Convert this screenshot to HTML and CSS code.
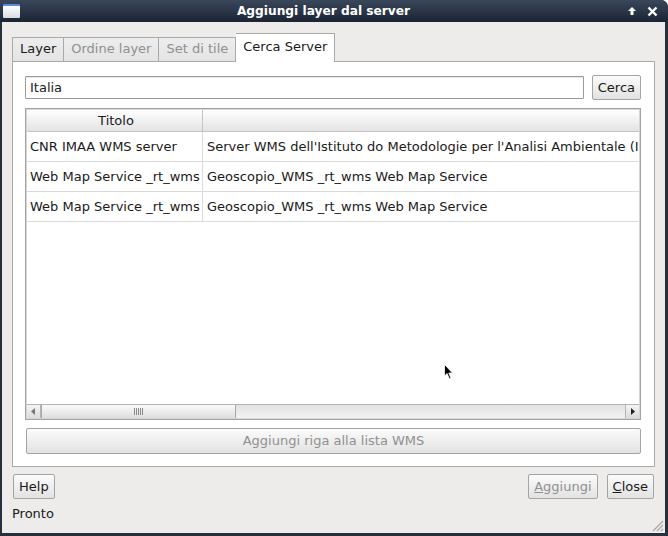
FILE: index.html
```html
<!DOCTYPE html>
<html>
<head>
<meta charset="utf-8">
<link rel="stylesheet" href="styles.css">
</head>
<body>
<div class="window">
  <div class="titlebar">
    <span class="winicon"></span>
    <span class="title">Aggiungi layer dal server</span>
    <span class="tbtns">
      <svg width="10" height="10" viewBox="0 0 10 10"><path d="M5 1 L9 5 L6.5 5 L6.5 9 L3.5 9 L3.5 5 L1 5 Z" fill="#fff"/></svg>
      <svg width="11" height="11" viewBox="0 0 11 11"><path d="M1.5 1.5 L9.5 9.5 M9.5 1.5 L1.5 9.5" stroke="#fff" stroke-width="2.4"/></svg>
    </span>
  </div>
  <div class="client">
    <div class="tabs">
      <div class="tab">Layer</div>
      <div class="tab dis">Ordine layer</div>
      <div class="tab dis">Set di tile</div>
      <div class="tab sel">Cerca Server</div>
    </div>
    <div class="pane">
      <div class="searchrow">
        <div class="input">Italia</div>
        <div class="btn">Cerca</div>
      </div>
      <div class="table">
        <div class="thead">
          <div class="c1 h">Titolo</div>
          <div class="c2 h"></div>
        </div>
        <div class="row"><div class="c1">CNR IMAA WMS server</div><div class="c2">Server WMS dell'Istituto do Metodologie per l'Analisi Ambientale (I</div></div>
        <div class="row"><div class="c1">Web Map Service _rt_wms</div><div class="c2">Geoscopio_WMS _rt_wms Web Map Service</div></div>
        <div class="row"><div class="c1">Web Map Service _rt_wms</div><div class="c2">Geoscopio_WMS _rt_wms Web Map Service</div></div>
        <div class="tbody-fill"></div>
        <div class="hscroll">
          <div class="arrow"><svg width="5" height="7" viewBox="0 0 5 7"><path d="M4 0 L0 3.5 L4 7 Z" fill="#777"/></svg></div>
          <div class="thumb"><span class="grip"></span></div>
          <div class="track"></div>
          <div class="arrow r"><svg width="5" height="7" viewBox="0 0 5 7"><path d="M1 0 L5 3.5 L1 7 Z" fill="#222"/></svg></div>
        </div>
      </div>
      <div class="btn wide dis">Aggiungi riga alla lista WMS</div>
    </div>
    <div class="bottomrow">
      <div class="btn">Help</div>
      <div class="spacer"></div>
      <div class="btn dis"><u>A</u>ggiungi</div>
      <div class="btn"><u>C</u>lose</div>
    </div>
    <div class="status">Pronto</div>
    <svg class="sizegrip" width="14" height="14" viewBox="0 0 14 14">
      <path d="M13 3 L3 13 M13 7 L7 13 M13 11 L11 13" stroke="#a8a8a8" stroke-width="1.2"/>
    </svg>
  </div>
  <svg class="cursor" width="12" height="18" viewBox="0 0 12 18">
    <path d="M0.5 0.5 L0.5 12 L3 9.5 L5.5 15 L7 14.3 L4.8 9 L8.5 9 Z" fill="#000" stroke="#fff" stroke-width="0.8"/>
  </svg>
</div>
</body>
</html>
```
FILE: styles.css
```css
* { box-sizing: border-box; }
html, body { margin: 0; padding: 0; }
body {
  width: 668px; height: 536px; overflow: hidden;
  font-family: "DejaVu Sans", sans-serif; font-size: 13px; color: #1a1a1a;
  background: #ffffff;
}
.window {
  position: relative;
  width: 668px; height: 536px;
  background: #27303d;
  border-top-right-radius: 7px;
  display: flex; flex-direction: column;
}
.titlebar {
  height: 22px; flex: none;
  display: flex; align-items: center;
  background: linear-gradient(#3a475a, #1b2434);
  border-top-right-radius: 7px;
  position: relative;
}
.winicon {
  margin-left: 3px; width: 17px; height: 14px;
  background: linear-gradient(#ffffff, #d8dbe0);
  border-top: 2px solid #5c8ad6;
  border-radius: 1px;
}
.title {
  flex: 1; text-align: center;
  color: #fff; font-weight: bold; font-size: 12.2px;
  padding-left: 0;
}
.tbtns { display: flex; align-items: center; gap: 10px; margin-right: 10px; }
.client {
  flex: 1; position: relative;
  background: #edecea;
  margin: 0 3px 3px 2px;
  padding: 11px 10px 0 10px;
  display: flex; flex-direction: column;
}
.tabs { display: flex; align-items: flex-end; height: 28px; position: relative; z-index: 1; }
.tab {
  height: 24px; padding: 0 7px; line-height: 21px;
  border: 1px solid #a9a9a9; border-bottom: none; border-left: none;
  background: linear-gradient(#ededed, #e4e4e4);
  color: #1a1a1a;
}
.tab:first-child { border-left: 1px solid #a9a9a9; }
.tab.dis { color: #8f8f8f; }
.tab.sel {
  background: #fff; line-height: 25px;
  padding: 0 7px; margin-bottom: -1px; height: 29px;
}
.pane {
  height: 406px; flex: none;
  background: #fff; border: 1px solid #a9a9a9;
  padding: 12px 13px 12px 12px;
  display: flex; flex-direction: column;
}
.searchrow { display: flex; align-items: center; gap: 8px; height: 26px; }
.input {
  flex: 1; height: 23px; border: 1px solid #9b9b9b;
  border-radius: 1px; padding: 0 4px; line-height: 21px;
  box-shadow: inset 0 1px 0 #e8e8e8;
}
.btn {
  height: 25px; padding: 0 5px; line-height: 23px;
  border: 1px solid #a4a4a4; border-radius: 2px;
  background: linear-gradient(#fbfbfb, #e2e2e2);
  text-align: center; color: #1a1a1a;
}
.btn.dis { color: #909090; }
.btn u { text-decoration: underline; }
.table {
  margin-top: 8px; height: 312px; flex: none;
  border: 1px solid #a3a3a3;
  box-shadow: inset 0 0 0 1px #d6d6d6;
  display: flex; flex-direction: column;
  padding: 1px;
}
.thead {
  display: flex; height: 22px;
  background: linear-gradient(#ffffff, #e3e3e3);
  border-bottom: 1px solid #c4c4c4;
}
.thead .c1 { text-align: center; border-right: 1px solid #c4c4c4; }
.h { line-height: 21px; }
.c1 { width: 176px; flex: none; padding-left: 3px; white-space: nowrap; overflow: hidden; }
.c2 { flex: 1; padding-left: 4px; white-space: nowrap; overflow: hidden; }
.row { display: flex; height: 30px; border-bottom: 1px solid #dadada; }
.row .c1 { border-right: 1px solid #dadada; line-height: 29px; }
.row .c2 { line-height: 29px; }
.tbody-fill { flex: 1; }
.hscroll {
  height: 14px; display: flex; border-top: 1px solid #b4b4b4;
  background: linear-gradient(#e2e2e2, #f2f2f2);
}
.arrow {
  width: 14px; flex: none; display: flex; align-items: center; justify-content: center;
  background: linear-gradient(#f4f4f4, #dcdcdc);
  border-right: 1px solid #b4b4b4;
}
.arrow.r { border-right: none; border-left: 1px solid #b4b4b4; }
.thumb {
  width: 195px; flex: none;
  background: linear-gradient(#fafafa, #dedede);
  border: 1px solid #a8a8a8; border-top: none; border-bottom: none;
  display: flex; align-items: center; justify-content: center;
}
.grip {
  width: 9px; height: 7px;
  background: repeating-linear-gradient(90deg, #8a8a8a 0 1px, transparent 1px 2px);
}
.track { flex: 1; }
.btn.wide { margin-top: 8px; height: 26px; line-height: 24px; margin-left: 1px; }
.bottomrow { display: flex; gap: 9px; margin-top: 7px; padding: 0 1px; }
.spacer { flex: 1; }
.status { margin-top: 6px; line-height: 18px; }
.sizegrip { position: absolute; right: 1px; bottom: 1px; }
.cursor { position: absolute; left: 444px; top: 364px; }
```
